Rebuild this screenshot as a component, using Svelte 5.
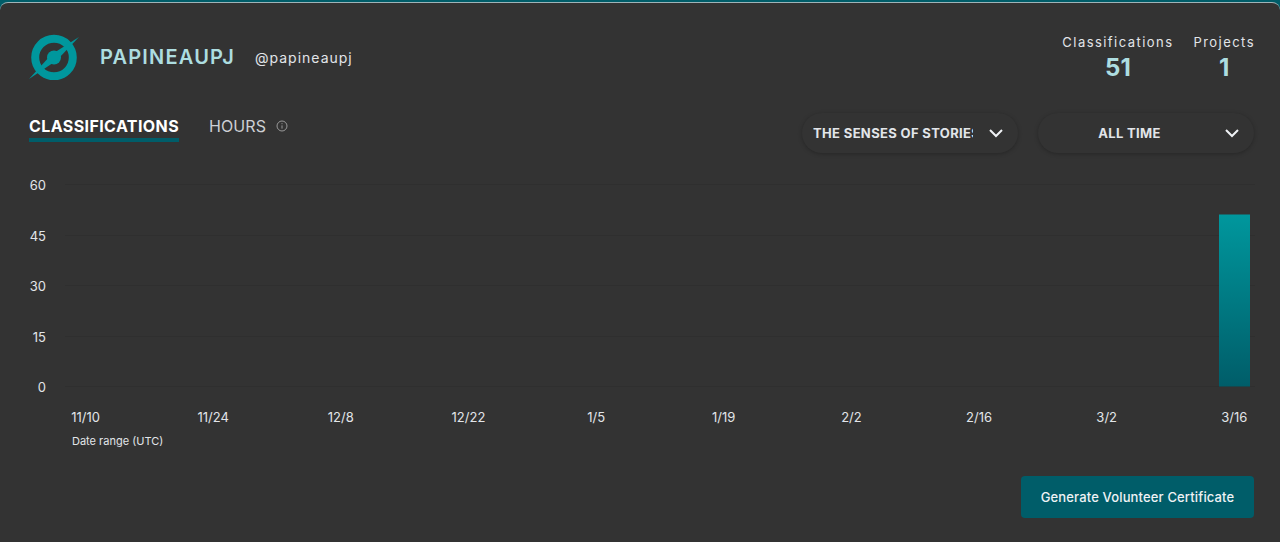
<script lang="ts">
	const yTicks = [
		{ label: '60', y: 184.5 },
		{ label: '45', y: 235.5 },
		{ label: '30', y: 285.5 },
		{ label: '15', y: 336.5 },
		{ label: '0', y: 386.5 }
	];
	const xTicks = ['11/10', '11/24', '12/8', '12/22', '1/5', '1/19', '2/2', '2/16', '3/2', '3/16'];
	const chartTop = 170;
</script>

<main class="card">
	<header class="top">
		<div class="user">
			<svg class="logo" width="52" height="46" viewBox="0 0 52 46" aria-hidden="true">
				<circle cx="26" cy="23.5" r="18.8" fill="none" stroke="#00979d" stroke-width="8" />
				<circle cx="26" cy="23.5" r="7" fill="#00979d" />
				<path d="M1 45 L23.4 20.5 L51 3 L28.6 26.5 Z" fill="#00979d" />
			</svg>
			<span class="name">PAPINEAUPJ</span>
			<span class="login">@papineaupj</span>
		</div>
		<div class="stats">
			<div class="stat">
				<span class="stat-label">Classifications</span>
				<span class="stat-value">51</span>
			</div>
			<div class="stat">
				<span class="stat-label">Projects</span>
				<span class="stat-value">1</span>
			</div>
		</div>
	</header>

	<div class="controls">
		<div class="tabs">
			<button class="tab active">CLASSIFICATIONS</button>
			<button class="tab">
				HOURS
				<svg width="12" height="12" viewBox="0 0 12 12" aria-hidden="true">
					<circle cx="6" cy="6" r="5" fill="none" stroke="#999" />
					<path d="M6 5.4v3.2M6 3.2v1" stroke="#999" />
				</svg>
			</button>
		</div>
		<div class="selects">
			<div class="select">
				<span class="select-label clipped">THE SENSES OF STORIES</span>
				<svg width="16" height="10" viewBox="0 0 16 10" aria-hidden="true">
					<path d="M2 2l6 6 6-6" fill="none" stroke="#eff2f5" stroke-width="2" />
				</svg>
			</div>
			<div class="select wide">
				<span class="select-label centered">ALL TIME</span>
				<svg width="16" height="10" viewBox="0 0 16 10" aria-hidden="true">
					<path d="M2 2l6 6 6-6" fill="none" stroke="#eff2f5" stroke-width="2" />
				</svg>
			</div>
		</div>
	</div>

	<svg class="chart" width="1280" height="285" viewBox="0 {chartTop} 1280 285">
		<defs>
			<linearGradient id="bar" x1="0" y1="0" x2="0" y2="1">
				<stop offset="0" stop-color="#00979d" />
				<stop offset="1" stop-color="#005d69" />
			</linearGradient>
		</defs>
		{#each yTicks as tick}
			<line x1="65" x2="1255" y1={tick.y} y2={tick.y} stroke="#2f2f2f" />
			<text class="tick" x="46" y={tick.y + 5} text-anchor="end">{tick.label}</text>
		{/each}
		{#each xTicks as tick, i}
			<text class="tick" x={85.5 + i * 127.65} y="422" text-anchor="middle">{tick}</text>
		{/each}
		<rect x="1219" y="214.5" width="31" height="172" fill="url(#bar)" />
		<text class="range" x="72" y="445">Date range (UTC)</text>
	</svg>

	<div class="actions">
		<button class="certificate">Generate Volunteer Certificate</button>
	</div>
</main>

<style>
	:global(body) {
		background: #005d69;
	}

	.card {
		box-sizing: border-box;
		height: 540px;
		margin-top: 2px;
		background: #333333;
		border-top: 1px solid #9fb4b8;
		border-radius: 8px 8px 0 0;
		font-family: 'Inter', 'Liberation Sans', sans-serif;
		color: #eff2f5;
		overflow: hidden;
	}

	.top {
		display: flex;
		justify-content: space-between;
		padding: 31px 25px 0 28px;
		height: 73px;
		box-sizing: border-box;
	}

	.user {
		display: flex;
		align-items: center;
		height: 46px;
	}

	.logo {
		margin-right: 20px;
	}

	.name {
		font-size: 20px;
		font-weight: 600;
		letter-spacing: 1.2px;
		color: #addde0;
		margin-right: 20px;
	}

	.login {
		font-size: 14px;
		letter-spacing: 1px;
		color: #e2e5e9;
	}

	.stats {
		display: flex;
		gap: 20px;
	}

	.stat {
		display: flex;
		flex-direction: column;
		align-items: center;
	}

	.stat-label {
		font-size: 13px;
		line-height: 16px;
		letter-spacing: 1.45px;
		color: #e2e5e9;
	}

	.stat-value {
		font-size: 24px;
		line-height: 36px;
		font-weight: 700;
		color: #addde0;
	}

	.controls {
		display: flex;
		justify-content: space-between;
		height: 96px;
		padding: 37px 26px 0 29px;
		box-sizing: border-box;
	}

	.tabs {
		display: flex;
		gap: 30px;
		align-items: flex-start;
		padding-top: 2px;
	}

	.tab {
		background: none;
		border: 0;
		padding: 0 0 1px;
		font: inherit;
		font-size: 16px;
		line-height: 22px;
		letter-spacing: 0.4px;
		color: #cdd0d4;
		border-bottom: 4px solid transparent;
		display: flex;
		align-items: center;
		gap: 10px;
	}

	.tab + .tab {
		letter-spacing: 0.1px;
	}

	.tab.active {
		font-weight: 700;
		color: #ffffff;
		border-bottom-color: #005d69;
	}

	.selects {
		display: flex;
		gap: 20px;
	}

	.select {
		display: flex;
		align-items: center;
		justify-content: space-between;
		box-sizing: border-box;
		width: 216px;
		height: 40px;
		padding: 0 14px 0 11px;
		border-radius: 20px;
		background: #333333;
		box-shadow: 0 1px 4px rgba(0, 0, 0, 0.25);
	}

	.select-label {
		font-size: 13px;
		font-weight: 700;
		letter-spacing: 0.35px;
		color: #e2e5e9;
		white-space: nowrap;
	}

	.clipped {
		width: 160px;
		overflow: hidden;
	}

	.centered {
		flex: 1;
		text-align: center;
		padding-right: 14px;
	}

	.chart {
		display: block;
		margin-top: -2px;
	}

	.tick {
		font-size: 13px;
		fill: #e2e5e9;
	}

	.range {
		font-size: 11px;
		fill: #e2e5e9;
	}

	.actions {
		display: flex;
		justify-content: flex-end;
		padding: 21px 26px 0 0;
	}

	.certificate {
		width: 233px;
		height: 42px;
		border: 0;
		border-radius: 4px;
		background: #005d69;
		color: #eff2f5;
		font: inherit;
		font-size: 13px;
		font-weight: 500;
		letter-spacing: 0.15px;
	}
</style>
